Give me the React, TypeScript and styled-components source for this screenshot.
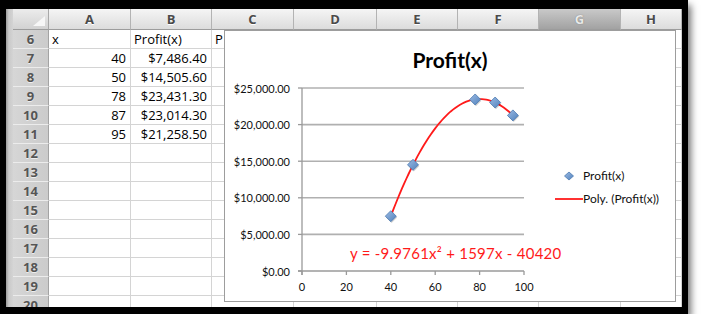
import React from "react";
import styled, { createGlobalStyle } from "styled-components";

const GlobalStyle = createGlobalStyle`
  html, body { margin: 0; padding: 0; background: #ffffff; }
  body { font-family: "Open Sans", "Liberation Sans", sans-serif; }
  * { box-sizing: border-box; }
`;

const COLS = [36, 82, 81, 82, 83, 81, 81, 82, 61];
const LETTERS = ["A", "B", "C", "D", "E", "F", "G", "H"];
const SELECTED_COL = "G";

type CellVal = string | number | null;
const ROWS: { n: number; cells: CellVal[] }[] = [
  { n: 6, cells: ["x", "Profit(x)", "P"] },
  { n: 7, cells: [40, "$7,486.40"] },
  { n: 8, cells: [50, "$14,505.60"] },
  { n: 9, cells: [78, "$23,431.30"] },
  { n: 10, cells: [87, "$23,014.30"] },
  { n: 11, cells: [95, "$21,258.50"] },
  { n: 12, cells: [] },
  { n: 13, cells: [] },
  { n: 14, cells: [] },
  { n: 15, cells: [] },
  { n: 16, cells: [] },
  { n: 17, cells: [] },
  { n: 18, cells: [] },
  { n: 19, cells: [] },
  { n: 20, cells: [] },
];

const POINTS: [number, number][] = [
  [40, 7486.4],
  [50, 14505.6],
  [78, 23431.3],
  [87, 23014.3],
  [95, 21258.5],
];

const Frame = styled.div`
  width: 688px;
  height: 314px;
  border-style: solid;
  border-color: #000;
  border-width: 9px 6px 7px 6px;
  display: flex;
  box-shadow: 3px 5px 7px rgba(0, 0, 0, 0.55);
  background: #fff;
`;

const LeftStrip = styled.div`
  width: 7px;
  background: linear-gradient(to right, #9a9a9a, #c9c9c9 40%, #d4d4d4);
`;

const Sheet = styled.div`
  position: relative;
  flex: 1;
  height: 298px;
  overflow: hidden;
  display: grid;
  grid-template-columns: ${COLS.map((c) => c + "px").join(" ")};
  grid-template-rows: 21px;
  grid-auto-rows: 19px;
  background: #fff;
`;

const Corner = styled.div`
  position: relative;
  background: linear-gradient(#ececec, #d2d2d2);
  border-right: 1px solid #a8a8a8;
  border-bottom: 1px solid #9c9c9c;
  &::after {
    content: "";
    position: absolute;
    right: 3px;
    bottom: 3px;
    width: 0;
    height: 0;
    border-left: 12px solid transparent;
    border-bottom: 10px solid #f7f7f7;
  }
`;

const ColHead = styled.div<{ $selected?: boolean }>`
  display: flex;
  align-items: center;
  justify-content: center;
  font-weight: 700;
  font-size: 13px;
  color: ${(p) => (p.$selected ? "#e9e9e9" : "#4a4a4a")};
  text-shadow: ${(p) => (p.$selected ? "0 0 1px #666" : "0 1px 0 #fff")};
  background: ${(p) =>
    p.$selected
      ? "linear-gradient(#c9c9c9, #a2a2a2)"
      : "linear-gradient(#f5f5f5, #dcdcdc)"};
  border-right: 1px solid #b3b3b3;
  border-bottom: 1px solid #9c9c9c;
`;

const RowHead = styled.div`
  display: flex;
  align-items: center;
  justify-content: center;
  font-weight: 700;
  font-size: 13px;
  color: #555;
  text-shadow: 0 1px 0 #eee;
  background: linear-gradient(to right, #d6d6d6, #cbcbcb);
  border-right: 1px solid #a3a3a3;
  border-bottom: 1px solid #ececec;
`;

const Cell = styled.div<{ $align: "left" | "right" }>`
  display: flex;
  align-items: center;
  justify-content: ${(p) => (p.$align === "right" ? "flex-end" : "flex-start")};
  padding: 0 4px 0 3px;
  font-size: 13px;
  color: #000;
  white-space: nowrap;
  overflow: visible;
  border-right: 1px solid #d4d4d4;
  border-bottom: 1px solid #d4d4d4;
`;

const Chart = styled.div`
  position: absolute;
  left: 211px;
  top: 21px;
  width: 452px;
  height: 272px;
  background: #fff;
  border: 1px solid #9d9d9d;
  display: flex;
  flex-direction: column;
  font-family: Lato, "Open Sans", sans-serif;
`;

const ChartTitle = styled.div`
  margin-top: 17px;
  height: 24px;
  line-height: 24px;
  text-align: center;
  font-size: 21px;
  font-weight: 700;
  color: #000;
`;

const PlotRow = styled.div`
  margin-top: 6px;
  display: flex;
  align-items: center;
`;

const Plot = styled.svg`
  flex: none;
  display: block;
  overflow: visible;
  text {
    font-family: Lato, "Open Sans", sans-serif;
    font-size: 11px;
    fill: #111;
  }
  text.eq {
    font-size: 15px;
    letter-spacing: 0.25px;
    fill: #ff1a1a;
  }
`;

const Legend = styled.div`
  margin-left: 10px;
  display: flex;
  flex-direction: column;
  gap: 9px;
`;

const LegendItem = styled.div`
  display: flex;
  align-items: center;
  height: 14px;
  font-size: 12px;
  color: #111;
`;

const LegendMark = styled.svg`
  flex: none;
  width: 28px;
  height: 14px;
  display: block;
`;

const X0 = 77;
const Y0 = 193;
const XS = 2.22;
const YS = 183 / 25000;
const px = (x: number) => X0 + x * XS;
const py = (v: number) => Y0 - v * YS;

const fmt = (v: number) =>
  "$" + v.toLocaleString("en-US", { minimumFractionDigits: 2, maximumFractionDigits: 2 });

const Diamond: React.FC<{ cx: number; cy: number; r?: number }> = ({ cx, cy, r = 5.5 }) => (
  <g>
    <polygon
      points={`${cx + 0.8},${cy - r + 1.2} ${cx + r + 0.8},${cy + 1.2} ${cx + 0.8},${cy + r + 1.2} ${cx - r + 0.8},${cy + 1.2}`}
      fill="rgba(0,0,0,0.18)"
    />
    <polygon
      points={`${cx},${cy - r} ${cx + r},${cy} ${cx},${cy + r} ${cx - r},${cy}`}
      fill="url(#dg)"
      stroke="#4a78b0"
      strokeWidth={0.8}
    />
  </g>
);

const trend = (x: number) => -9.9761 * x * x + 1597 * x - 40420;

const ChartPlot: React.FC = () => {
  const grid = [5000, 10000, 15000, 20000, 25000];
  const yticks = [0, 5000, 10000, 15000, 20000, 25000];
  const xticks = [0, 20, 40, 60, 80, 100];
  const pts: string[] = [];
  for (let x = 40; x <= 95.001; x += 1) pts.push(`${px(x).toFixed(2)},${py(trend(x)).toFixed(2)}`);
  return (
    <Plot width={320} height={218} viewBox="0 0 320 218">
      <defs>
        <linearGradient id="dg" x1="0" y1="0" x2="1" y2="1">
          <stop offset="0" stopColor="#9dbbe3" />
          <stop offset="1" stopColor="#4f81bd" />
        </linearGradient>
      </defs>
      {grid.map((v) => (
        <line key={v} x1={X0} x2={299} y1={py(v)} y2={py(v)} stroke="#b0b0b0" strokeWidth={1.6} />
      ))}
      <line x1={X0} x2={X0} y1={py(25000)} y2={Y0 + 4} stroke="#9a9a9a" strokeWidth={1.3} />
      <line x1={X0 - 4} x2={299} y1={Y0} y2={Y0} stroke="#9a9a9a" strokeWidth={1.3} />
      {yticks.map((v) => (
        <g key={v}>
          <line x1={X0 - 4} x2={X0} y1={py(v)} y2={py(v)} stroke="#9a9a9a" strokeWidth={1.3} />
          <text x={65} y={py(v)} textAnchor="end" dominantBaseline="central">
            {fmt(v)}
          </text>
        </g>
      ))}
      {xticks.map((x) => (
        <g key={x}>
          <line x1={px(x)} x2={px(x)} y1={Y0} y2={Y0 + 4} stroke="#9a9a9a" strokeWidth={1.3} />
          <text x={px(x)} y={208} textAnchor="middle" dominantBaseline="central">
            {x}
          </text>
        </g>
      ))}
      <polyline points={pts.join(" ")} fill="none" stroke="#ff1a1a" strokeWidth={1.8} />
      {POINTS.map(([x, v]) => (
        <Diamond key={x} cx={px(x)} cy={py(v)} />
      ))}
      <text className="eq" x={125} y={175} dominantBaseline="central">
        y = -9.9761x² + 1597x - 40420
      </text>
    </Plot>
  );
};

export default function App() {
  return (
    <>
      <GlobalStyle />
      <Frame>
        <LeftStrip />
        <Sheet>
          <Corner />
          {LETTERS.map((l) => (
            <ColHead key={l} $selected={l === SELECTED_COL}>
              {l}
            </ColHead>
          ))}
          {ROWS.map((r) => (
            <React.Fragment key={r.n}>
              <RowHead>{r.n}</RowHead>
              {LETTERS.map((l, i) => {
                const v = r.cells[i];
                const isNum = typeof v === "number" || (typeof v === "string" && v.startsWith("$"));
                return (
                  <Cell key={l} $align={isNum ? "right" : "left"}>
                    {v ?? ""}
                  </Cell>
                );
              })}
            </React.Fragment>
          ))}
          <Chart>
            <ChartTitle>Profit(x)</ChartTitle>
            <PlotRow>
              <ChartPlot />
              <Legend>
                <LegendItem>
                  <LegendMark viewBox="0 0 28 14">
                    <defs>
                      <linearGradient id="lg" x1="0" y1="0" x2="1" y2="1">
                        <stop offset="0" stopColor="#9dbbe3" />
                        <stop offset="1" stopColor="#4f81bd" />
                      </linearGradient>
                    </defs>
                    <polygon points="14,3 18.5,7 14,11 9.5,7" fill="url(#lg)" stroke="#4a78b0" strokeWidth={0.8} />
                  </LegendMark>
                  Profit(x)
                </LegendItem>
                <LegendItem>
                  <LegendMark viewBox="0 0 28 14">
                    <line x1={0} x2={28} y1={7} y2={7} stroke="#ff1a1a" strokeWidth={1.8} />
                  </LegendMark>
                  Poly. (Profit(x))
                </LegendItem>
              </Legend>
            </PlotRow>
          </Chart>
        </Sheet>
      </Frame>
    </>
  );
}
